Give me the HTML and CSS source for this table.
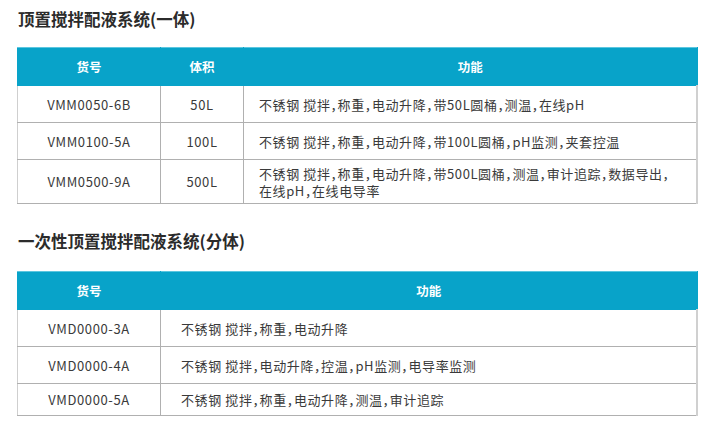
FILE: index.html
```html
<!DOCTYPE html>
<html lang="zh-CN">
<head>
<meta charset="utf-8">
<link rel="stylesheet" href="styles.css">
</head>
<body>
<div class="page">
  <h2 class="title">顶置搅拌配液系统(一体)</h2>
  <table class="spec">
    <colgroup><col class="c-code"><col class="c-vol"><col></colgroup>
    <thead>
      <tr><th>货号</th><th>体积</th><th>功能</th></tr>
    </thead>
    <tbody>
      <tr><td class="center">VMM0050-6B</td><td class="center">50L</td><td>不锈钢 搅拌，称重，电动升降，带50L圆桶，测温，在线pH</td></tr>
      <tr><td class="center">VMM0100-5A</td><td class="center">100L</td><td>不锈钢 搅拌，称重，电动升降，带100L圆桶，pH监测，夹套控温</td></tr>
      <tr class="tall"><td class="center">VMM0500-9A</td><td class="center">500L</td><td><span class="line">不锈钢 搅拌，称重，电动升降，带500L圆桶，测温，审计追踪，数据导出，</span><span class="line">在线pH，在线电导率</span></td></tr>
    </tbody>
  </table>

  <h2 class="title second">一次性顶置搅拌配液系统(分体)</h2>
  <table class="spec">
    <colgroup><col class="c-code"><col></colgroup>
    <thead>
      <tr><th>货号</th><th>功能</th></tr>
    </thead>
    <tbody>
      <tr><td class="center">VMD0000-3A</td><td class="wide">不锈钢 搅拌，称重，电动升降</td></tr>
      <tr><td class="center">VMD0000-4A</td><td class="wide">不锈钢 搅拌，电动升降，控温，pH监测，电导率监测</td></tr>
      <tr class="short"><td class="center">VMD0000-5A</td><td class="wide">不锈钢 搅拌，称重，电动升降，测温，审计追踪</td></tr>
    </tbody>
  </table>
</div>
</body>
</html>
```

FILE: styles.css
```css
html, body {
  margin: 0;
  padding: 0;
  background: #ffffff;
}

body {
  font-family: "Noto Sans CJK SC", "Noto Sans", sans-serif;
  color: #3a3a3a;
}

.page {
  padding: 8px 16px 0 17px;
  width: 681px;
}

.title {
  margin: 0 0 0 1px;
  font-size: 16.5px;
  line-height: 22px;
  font-weight: 700;
  color: #2b2b2b;
}

.title.second {
  margin-top: 26px;
}

.spec {
  margin-top: 17px;
  width: 681px;
  border-collapse: collapse;
  table-layout: fixed;
  font-size: 13px;
  font-feature-settings: "halt";
  letter-spacing: 0.6px;
}

.title.second + .spec {
  margin-top: 19px;
}

.c-code { width: 143px; }
.c-vol { width: 83px; }

.spec th {
  background: #08a3c9;
  color: #ffffff;
  font-weight: 700;
  font-size: 12.5px;
  letter-spacing: 0;
  height: 37px;
  padding: 0;
  border: 1px solid #08a3c9;
  border-top-color: #5cc6df;
  text-align: center;
  font-feature-settings: normal;
}

.spec td {
  height: 37px;
  box-sizing: border-box;
  padding: 0 0 0 15px;
  border: 1px solid #b0b0b0;
  line-height: 17px;
  vertical-align: middle;
}

.spec td:first-child {
  border-left-color: #cfcfcf;
}

.spec td:last-child {
  border-right: 2px solid #d0d0d0;
}

.spec td.center {
  text-align: center;
  padding: 0;
}

.spec td.wide {
  padding-left: 20px;
}

.line {
  display: block;
  height: 17px;
  line-height: 17px;
}

.spec tr.tall td {
  height: 44px;
  padding-top: 4px;
  padding-bottom: 4px;
}

.spec tr.tall td.center {
  padding: 0;
}

.spec tr.short td {
  height: 32px;
}
```
